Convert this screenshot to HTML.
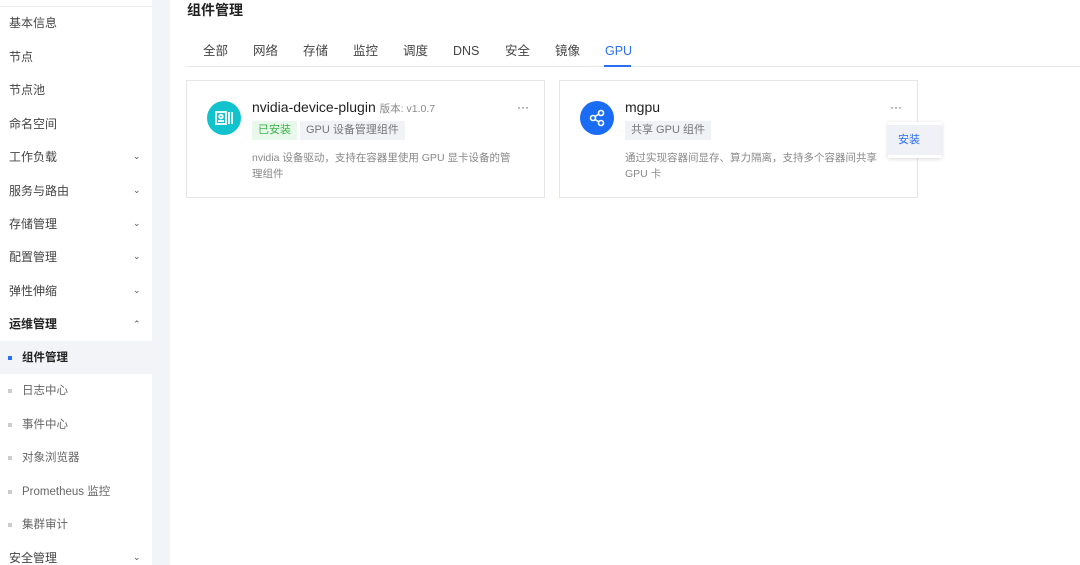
<!DOCTYPE html>
<html><head><meta charset="utf-8"><style>
*{margin:0;padding:0;box-sizing:border-box}
body{width:1080px;height:565px;overflow:hidden;background:#fff;font-family:"Liberation Sans","Noto Sans CJK SC",sans-serif;color:#333;position:relative}
.side{position:absolute;left:0;top:0;width:152px;height:565px;background:#fff;border-top:0}
.gap{position:absolute;left:152px;top:0;width:18px;height:565px;background:#f3f4f7}
.sline{position:absolute;left:0;top:6px;width:152px;height:1px;background:#eceef2}
.it{position:absolute;left:9px;font-size:12px;color:#444;line-height:14px}
.chev{position:absolute;left:133px;font-size:9px;color:#555}
.sub{position:absolute;left:22px;font-size:11.5px;color:#666;line-height:14px}
.dot{position:absolute;left:8px;width:4px;height:4px;background:#ccc}
.t{position:absolute;font-size:12.5px;color:#444;top:44px;line-height:14px;height:14px}
.card{position:absolute;top:80px;height:118px;border:1px solid #e4e6eb;background:#fff}
.ic{position:absolute;width:34px;height:34px;border-radius:50%}
.name{position:absolute;font-size:14px;color:#222}
.tag{position:absolute;top:121px;height:19px;font-size:11px;line-height:19px;padding:0 6px;background:#f1f2f5;color:#777}
.desc{position:absolute;font-size:10.5px;color:#888;line-height:16px}
.more{position:absolute;top:100px;font-size:12px;color:#555;letter-spacing:0px}
</style></head><body>
<div class="side">
<div class="sline"></div>
<div class="it" style="top:16px">基本信息</div>
<div class="it" style="top:50px">节点</div>
<div class="it" style="top:83px">节点池</div>
<div class="it" style="top:117px">命名空间</div>
<div class="it" style="top:150px">工作负载</div><div class="chev" style="top:151px">⌄</div>
<div class="it" style="top:184px">服务与路由</div><div class="chev" style="top:185px">⌄</div>
<div class="it" style="top:217px">存储管理</div><div class="chev" style="top:218px">⌄</div>
<div class="it" style="top:250px">配置管理</div><div class="chev" style="top:251px">⌄</div>
<div class="it" style="top:284px">弹性伸缩</div><div class="chev" style="top:285px">⌄</div>
<div class="it" style="top:317px;color:#222;font-weight:bold">运维管理</div><div class="chev" style="top:319px">⌃</div>
<div style="position:absolute;left:0;top:341px;width:152px;height:33px;background:#f3f4f7"></div>
<div class="dot" style="top:356px;background:#2b6ef6"></div><div class="sub" style="top:351px;color:#222;font-weight:bold">组件管理</div>
<div class="dot" style="top:389px"></div><div class="sub" style="top:384px">日志中心</div>
<div class="dot" style="top:423px"></div><div class="sub" style="top:418px">事件中心</div>
<div class="dot" style="top:456px"></div><div class="sub" style="top:451px">对象浏览器</div>
<div class="dot" style="top:490px"></div><div class="sub" style="top:485px">Prometheus 监控</div>
<div class="dot" style="top:523px"></div><div class="sub" style="top:518px">集群审计</div>
<div class="it" style="top:551px">安全管理</div><div class="chev" style="top:552px">⌄</div>
</div>
<div class="gap"></div>
<div style="position:absolute;left:187px;top:1px;font-size:14px;line-height:18px;font-weight:bold;color:#222">组件管理</div>
<div class="t" style="left:203px">全部</div>
<div class="t" style="left:253px">网络</div>
<div class="t" style="left:303px">存储</div>
<div class="t" style="left:353px">监控</div>
<div class="t" style="left:403px">调度</div>
<div class="t" style="left:453px">DNS</div>
<div class="t" style="left:505px">安全</div>
<div class="t" style="left:555px">镜像</div>
<div class="t" style="left:605px;color:#2b6ef6">GPU</div>
<div style="position:absolute;left:186px;top:66px;width:894px;height:1px;background:#e6e8ee"></div>
<div style="position:absolute;left:604px;top:65px;width:27px;height:2px;background:#2b6ef6"></div>

<div class="card" style="left:186px;width:359px"></div>
<div class="ic" style="left:207px;top:101px;background:#12c2cc"><svg width="34" height="34" viewBox="0 0 34 34" fill="none" stroke="#fff" stroke-width="1.8"><rect x="9" y="11" width="10" height="12"/><circle cx="14" cy="15.5" r="1.8"/><path d="M11 20h6M22 11v12M25 11v12"/></svg></div>
<div class="name" style="left:252px;top:99px">nvidia-device-plugin <span style="font-size:10.5px;color:#888">版本: v1.0.7</span></div>
<div class="tag" style="left:252px;background:#e8f8ea;color:#3bb34a">已安装</div>
<div class="tag" style="left:300px">GPU 设备管理组件</div>
<div class="desc" style="left:252px;top:150px;width:262px">nvidia 设备驱动，支持在容器里使用 GPU 显卡设备的管理组件</div>
<div class="more" style="left:517px">···</div>

<div class="card" style="left:559px;width:359px"></div>
<div class="ic" style="left:580px;top:101px;background:#1a6cf5"><svg width="34" height="34" viewBox="0 0 34 34" fill="none" stroke="#fff" stroke-width="1.6"><circle cx="13" cy="17" r="2.5"/><circle cx="21" cy="12" r="2.5"/><circle cx="21" cy="22" r="2.5"/><path d="M15 15.5l4-2.5M15 18.5l4 2.5"/></svg></div>
<div class="name" style="left:625px;top:99px">mgpu</div>
<div class="tag" style="left:625px">共享 GPU 组件</div>
<div class="desc" style="left:625px;top:150px;width:256px">通过实现容器间显存、算力隔离，支持多个容器间共享 GPU 卡</div>
<div class="more" style="left:890px">···</div>
<div style="position:absolute;left:888px;top:122px;width:54px;height:36px;background:#fff;box-shadow:0 1px 4px rgba(0,0,0,.15)"><div style="margin-top:3px;height:30px;background:#eff1f7;color:#2b6ef6;font-size:11px;line-height:30px;padding-left:10px">安装</div></div>
</body></html>
